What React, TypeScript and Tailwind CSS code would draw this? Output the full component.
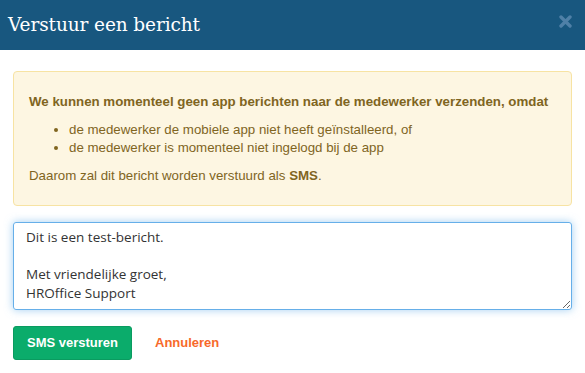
export default function App() {
  const message = "Dit is een test-bericht.\n\nMet vriendelijke groet,\nHROffice Support";

  return (
    <div className="h-[373px] w-[585px] overflow-hidden bg-white">
      <div className="flex h-[50px] items-center justify-between bg-[#18577f] pl-2 pr-[13px]">
        <h1 className="font-['DejaVu_Serif',serif] text-[18.5px] leading-none tracking-[-0.1px] text-white">Verstuur een bericht</h1>
        <button type="button" aria-label="Sluiten" className="mb-[8px] text-[#4f80a7]">
          <svg width="13" height="13" viewBox="0 0 13 13">
            <path d="M2 2 L11 11 M11 2 L2 11" stroke="currentColor" strokeWidth="3.4" strokeLinecap="round" />
          </svg>
        </button>
      </div>

      <div className="px-[13px] pt-[21px] font-['Liberation_Sans',Arial,sans-serif] text-[13px] leading-[18.57px]">
        <div className="rounded-[4px] border border-[#f7e3a3] bg-[#fdf6e2] px-[15px] pt-[21px] pb-[20px] text-[13.3px] text-[#80651f]">
          <p className="font-bold">We kunnen momenteel geen app berichten naar de medewerker verzenden, omdat</p>
          <ul className="mt-[9px] list-disc pl-10">
            <li>de medewerker de mobiele app niet heeft geïnstalleerd, of</li>
            <li>de medewerker is momenteel niet ingelogd bij de app</li>
          </ul>
          <p className="mt-[9px]">
            Daarom zal dit bericht worden verstuurd als <b>SMS</b>.
          </p>
        </div>

        <textarea
          defaultValue={message}
          className="mt-4 block h-[88px] w-full rounded-[3px] border border-[#66afe9] px-3 pt-[5px] font-['Open_Sans',sans-serif] text-[13.5px] leading-[18.57px] text-[#333] shadow-[0_0_8px_rgba(102,175,233,0.6)] outline-none"
        />

        <div className="mt-4 flex items-center">
          <button
            type="button"
            className="h-[34px] w-[119px] rounded-[3px] border border-[#0a9b60] bg-[#0bac6b] font-bold text-white"
          >
            SMS versturen
          </button>
          <button type="button" className="ml-[23px] font-bold text-[#f7692a]">
            Annuleren
          </button>
        </div>
      </div>
    </div>
  );
}
